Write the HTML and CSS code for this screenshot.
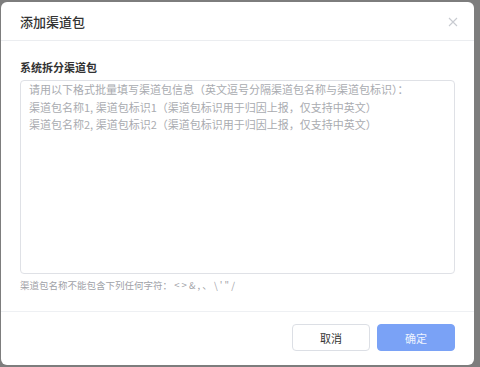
FILE: index.html
```html
<!DOCTYPE html>
<html lang="zh-CN">
<head>
<meta charset="utf-8">
<link rel="stylesheet" href="styles.css">
</head>
<body>
<div class="backdrop">
  <div class="modal">
    <div class="modal-header">
      <span class="modal-title">添加渠道包</span>
      <svg class="close" width="10" height="10" viewBox="0 0 10 10"><path d="M1 1L9 9M9 1L1 9" stroke="#c8cbd1" stroke-width="1.1" fill="none"/></svg>
    </div>
    <div class="modal-body">
      <div class="field-label">系统拆分渠道包</div>
      <textarea class="field-input" placeholder="请用以下格式批量填写渠道包信息（英文逗号分隔渠道包名称与渠道包标识）：&#10;渠道包名称1, 渠道包标识1（渠道包标识用于归因上报，仅支持中英文）&#10;渠道包名称2, 渠道包标识2（渠道包标识用于归因上报，仅支持中英文）"></textarea>
      <div class="field-hint">渠道包名称不能包含下列任何字符： &lt; &gt; &amp; , 、 \ ' " /</div>
    </div>
    <div class="modal-footer">
      <button class="btn btn-default">取消</button>
      <button class="btn btn-primary">确定</button>
    </div>
  </div>
</div>
</body>
</html>
```

FILE: styles.css
```css
html, body {
  margin: 0;
  padding: 0;
}
body {
  background: #7d7d7d;
  font-family: "Noto Sans CJK SC", "Noto Sans", "Liberation Sans", sans-serif;
  width: 480px;
  height: 367px;
  overflow: hidden;
}
.backdrop {
  padding: 2px 0 0 1px;
}
.modal {
  width: 473px;
  height: 363px;
  background: #fff;
  border-radius: 6px;
  display: flex;
  flex-direction: column;
  box-sizing: border-box;
}
.modal-header {
  height: 38px;
  border-bottom: 1px solid #ebedf0;
  display: flex;
  align-items: center;
  justify-content: space-between;
  padding: 0 16px 0 19px;
}
.modal-title {
  font-size: 13px;
  font-weight: 500;
  color: #333;
}
.close {
  margin-top: 2px;
}
.modal-body {
  padding: 18px 19px 19px 19px;
  border-bottom: 1px solid #eef0f3;
  display: flex;
  flex-direction: column;
}
.field-label {
  font-size: 11px;
  font-weight: 700;
  color: #333;
  line-height: 16px;
  margin-bottom: 5px;
}
.field-input {
  width: 435px;
  height: 194px;
  box-sizing: border-box;
  border: 1px solid #dfe1e6;
  border-radius: 4px;
  padding: 0 8px;
  margin: 0;
  resize: none;
  font-family: inherit;
  font-size: 11px;
  line-height: 17.5px;
  color: #333;
  outline: none;
}
.field-input::placeholder {
  color: #a9abb0;
}
.field-hint {
  margin-top: 4px;
  font-size: 9.5px;
  line-height: 14px;
  color: #9fa2a8;
}
.modal-footer {
  display: flex;
  justify-content: flex-end;
  gap: 7px;
  padding: 12px 19px 0 0;
}
.btn {
  width: 78px;
  height: 27px;
  border-radius: 4px;
  font-family: inherit;
  font-size: 11px;
  padding: 0;
  cursor: pointer;
}
.btn-default {
  background: #fff;
  border: 1px solid #dcdfe5;
  color: #333;
}
.btn-primary {
  background: #7aa2f6;
  border: 1px solid #7aa2f6;
  color: #eef3fe;
}
```
